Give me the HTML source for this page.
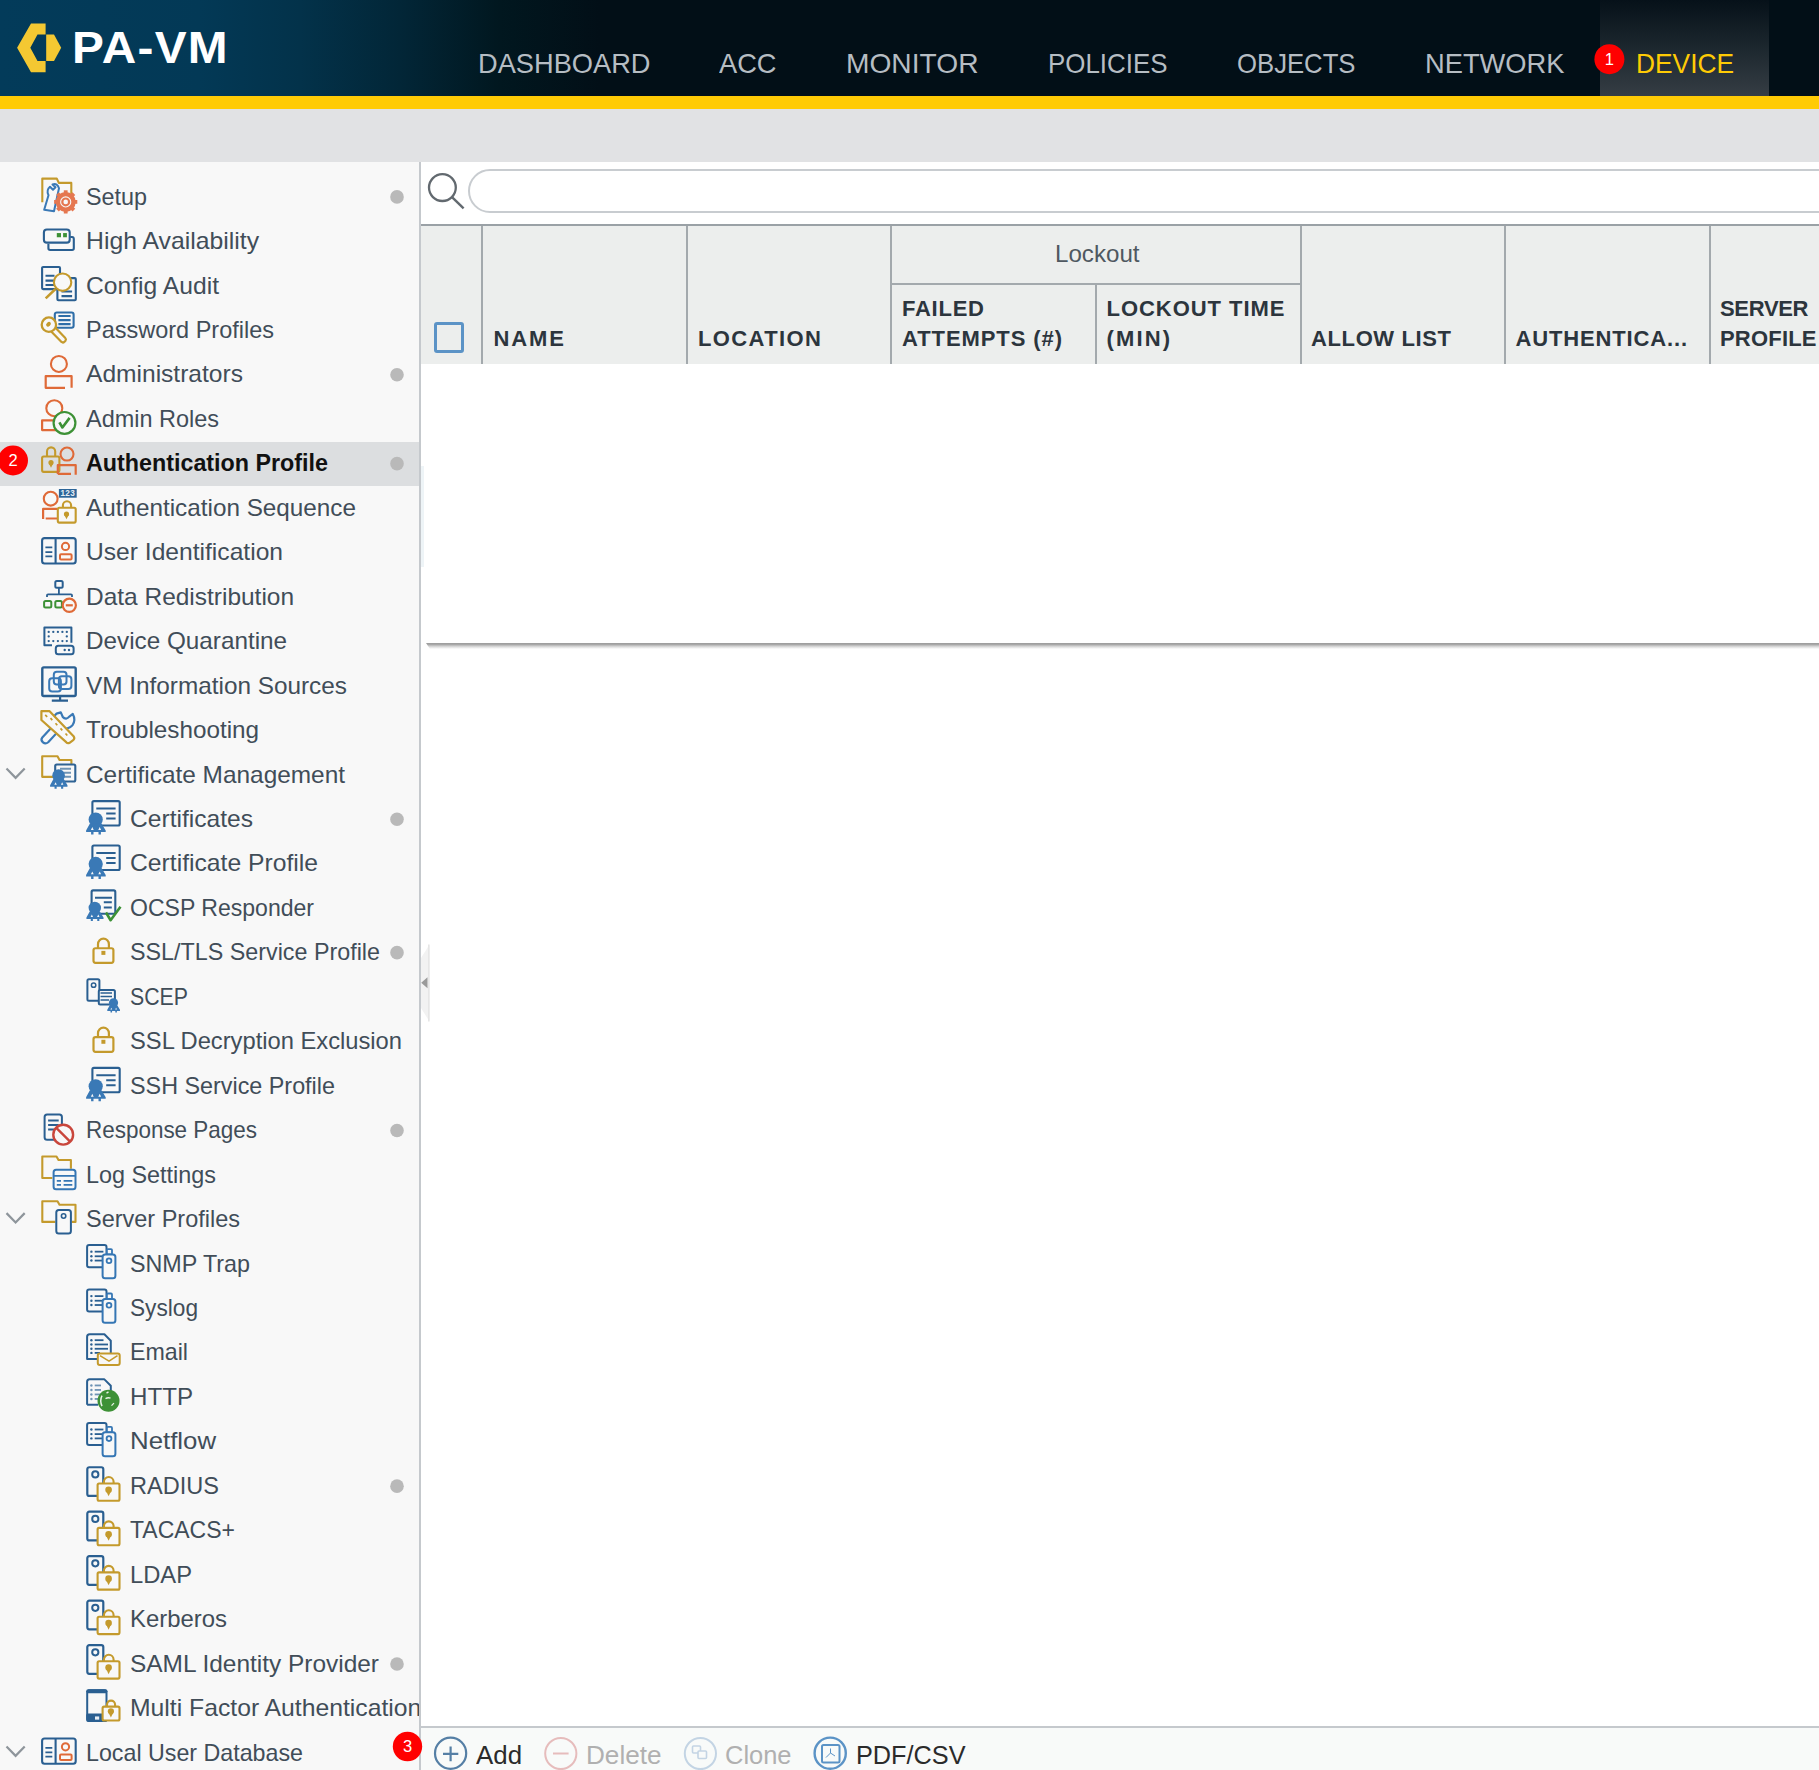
<!DOCTYPE html><html><head><meta charset="utf-8"><style>html,body{margin:0;padding:0;width:1819px;height:1770px;overflow:hidden;background:#fff}.t{position:absolute;white-space:nowrap;font-family:"Liberation Sans",sans-serif;transform-origin:0 0}</style></head><body><div style="position:relative;width:1819px;height:1770px;overflow:hidden"><div style="position:absolute;left:0px;top:0px;width:1819px;height:96px;background:linear-gradient(to right,#033b5a 0px,#033956 200px,#03324a 300px,#022637 400px,#01171f 500px,#020f17 600px,#020f17 100%);"></div><div style="position:absolute;left:1600px;top:0px;width:169px;height:96px;background:linear-gradient(to bottom,#061119 0%,#1a252c 45%,#353d44 100%);"></div><div style="position:absolute;left:0px;top:96px;width:1819px;height:13px;background:#ffcb05;"></div><div style="position:absolute;left:0px;top:109px;width:1819px;height:53px;background:#e1e2e4;"></div><div style="position:absolute;left:0px;top:162px;width:419px;height:1608px;background:#f8f8f8;"></div><div style="position:absolute;left:419px;top:162px;width:2px;height:1608px;background:#c5c9cd;"></div><div style="position:absolute;left:421px;top:162px;width:1398px;height:1608px;background:#ffffff;"></div><div style="position:absolute;left:421px;top:466px;width:3px;height:101px;background:#eef4f7;"></div><div style="position:absolute;left:0px;top:442px;width:419px;height:44px;background:#dcdee0;"></div><span class="t" style="left:72px;top:26.25px;font-size:44px;line-height:44px;color:#ffffff;font-weight:bold;letter-spacing:1.2px;transform:scaleX(1.0864);">PA-VM</span><span class="t" style="left:478px;top:49.50px;font-size:28px;line-height:28px;color:#b6bdc3;transform:scaleX(0.9727);">DASHBOARD</span><span class="t" style="left:719px;top:49.50px;font-size:28px;line-height:28px;color:#b6bdc3;transform:scaleX(0.9728);">ACC</span><span class="t" style="left:846px;top:49.50px;font-size:28px;line-height:28px;color:#b6bdc3;transform:scaleX(1.0059);">MONITOR</span><span class="t" style="left:1048px;top:49.50px;font-size:28px;line-height:28px;color:#b6bdc3;transform:scaleX(0.9252);">POLICIES</span><span class="t" style="left:1237px;top:49.50px;font-size:28px;line-height:28px;color:#b6bdc3;transform:scaleX(0.9177);">OBJECTS</span><span class="t" style="left:1425px;top:49.50px;font-size:28px;line-height:28px;color:#b6bdc3;transform:scaleX(0.9749);">NETWORK</span><span class="t" style="left:1635.5px;top:49.50px;font-size:28px;line-height:28px;color:#fecb05;transform:scaleX(0.9402);">DEVICE</span><div style="position:absolute;left:0;top:162px;width:419px;height:1608px;overflow:hidden"><span class="t" style="left:86px;top:22.58px;font-size:24px;line-height:24px;color:#414d58;transform:scaleX(0.9726)">Setup</span><span class="t" style="left:86px;top:67.04px;font-size:24px;line-height:24px;color:#414d58;transform:scaleX(1.0322)">High Availability</span><span class="t" style="left:86px;top:111.50px;font-size:24px;line-height:24px;color:#414d58;transform:scaleX(1.0278)">Config Audit</span><span class="t" style="left:86px;top:155.96px;font-size:24px;line-height:24px;color:#414d58;transform:scaleX(0.9788)">Password Profiles</span><span class="t" style="left:86px;top:200.41px;font-size:24px;line-height:24px;color:#414d58;transform:scaleX(1.0235)">Administrators</span><span class="t" style="left:86px;top:244.87px;font-size:24px;line-height:24px;color:#414d58;transform:scaleX(0.9776)">Admin Roles</span><span class="t" style="left:86px;top:289.33px;font-size:24px;line-height:24px;color:#111111;font-weight:bold;transform:scaleX(0.9705)">Authentication Profile</span><span class="t" style="left:86px;top:333.78px;font-size:24px;line-height:24px;color:#414d58;transform:scaleX(1.0118)">Authentication Sequence</span><span class="t" style="left:86px;top:378.24px;font-size:24px;line-height:24px;color:#414d58;transform:scaleX(1.0256)">User Identification</span><span class="t" style="left:86px;top:422.70px;font-size:24px;line-height:24px;color:#414d58;transform:scaleX(1.0192)">Data Redistribution</span><span class="t" style="left:86px;top:467.15px;font-size:24px;line-height:24px;color:#414d58;transform:scaleX(1.0113)">Device Quarantine</span><span class="t" style="left:86px;top:511.61px;font-size:24px;line-height:24px;color:#414d58;transform:scaleX(1.0137)">VM Information Sources</span><span class="t" style="left:86px;top:556.07px;font-size:24px;line-height:24px;color:#414d58;transform:scaleX(1.0106)">Troubleshooting</span><span class="t" style="left:86px;top:600.52px;font-size:24px;line-height:24px;color:#414d58;transform:scaleX(1.0166)">Certificate Management</span><span class="t" style="left:130px;top:644.98px;font-size:24px;line-height:24px;color:#414d58;transform:scaleX(1.0247)">Certificates</span><span class="t" style="left:130px;top:689.44px;font-size:24px;line-height:24px;color:#414d58;transform:scaleX(1.0288)">Certificate Profile</span><span class="t" style="left:130px;top:733.90px;font-size:24px;line-height:24px;color:#414d58;transform:scaleX(0.9601)">OCSP Responder</span><span class="t" style="left:130px;top:778.35px;font-size:24px;line-height:24px;color:#414d58;transform:scaleX(0.9710)">SSL/TLS Service Profile</span><span class="t" style="left:130px;top:822.81px;font-size:24px;line-height:24px;color:#414d58;transform:scaleX(0.8872)">SCEP</span><span class="t" style="left:130px;top:867.27px;font-size:24px;line-height:24px;color:#414d58;transform:scaleX(0.9882)">SSL Decryption Exclusion</span><span class="t" style="left:130px;top:911.72px;font-size:24px;line-height:24px;color:#414d58;transform:scaleX(0.9726)">SSH Service Profile</span><span class="t" style="left:86px;top:956.18px;font-size:24px;line-height:24px;color:#414d58;transform:scaleX(0.9356)">Response Pages</span><span class="t" style="left:86px;top:1000.64px;font-size:24px;line-height:24px;color:#414d58;transform:scaleX(0.9744)">Log Settings</span><span class="t" style="left:86px;top:1045.09px;font-size:24px;line-height:24px;color:#414d58;transform:scaleX(0.9784)">Server Profiles</span><span class="t" style="left:130px;top:1089.55px;font-size:24px;line-height:24px;color:#414d58;transform:scaleX(0.9708)">SNMP Trap</span><span class="t" style="left:130px;top:1134.01px;font-size:24px;line-height:24px;color:#414d58;transform:scaleX(0.9440)">Syslog</span><span class="t" style="left:130px;top:1178.47px;font-size:24px;line-height:24px;color:#414d58;transform:scaleX(0.9664)">Email</span><span class="t" style="left:130px;top:1222.92px;font-size:24px;line-height:24px;color:#414d58;transform:scaleX(1.0055)">HTTP</span><span class="t" style="left:130px;top:1267.38px;font-size:24px;line-height:24px;color:#414d58;transform:scaleX(1.0748)">Netflow</span><span class="t" style="left:130px;top:1311.84px;font-size:24px;line-height:24px;color:#414d58;transform:scaleX(0.9814)">RADIUS</span><span class="t" style="left:130px;top:1356.29px;font-size:24px;line-height:24px;color:#414d58;transform:scaleX(0.9581)">TACACS+</span><span class="t" style="left:130px;top:1400.75px;font-size:24px;line-height:24px;color:#414d58;transform:scaleX(0.9888)">LDAP</span><span class="t" style="left:130px;top:1445.21px;font-size:24px;line-height:24px;color:#414d58;transform:scaleX(0.9960)">Kerberos</span><span class="t" style="left:130px;top:1489.66px;font-size:24px;line-height:24px;color:#414d58;transform:scaleX(1.0181)">SAML Identity Provider</span><span class="t" style="left:130px;top:1534.12px;font-size:24px;line-height:24px;color:#414d58;transform:scaleX(1.0300)">Multi Factor Authentication</span><span class="t" style="left:86px;top:1578.58px;font-size:24px;line-height:24px;color:#414d58;transform:scaleX(0.9683)">Local User Database</span></div><div style="position:absolute;left:468px;top:168.5px;width:1400px;height:40px;border:2px solid #c8ccd0;border-radius:22px;background:#fff"></div><div style="position:absolute;left:421px;top:224px;width:1398px;height:2px;background:#9aa1a6;"></div><div style="position:absolute;left:421px;top:226px;width:1398px;height:138px;background:#eceeed;"></div><div style="position:absolute;left:481px;top:226px;width:2px;height:138px;background:#a3a9ad;"></div><div style="position:absolute;left:686px;top:226px;width:2px;height:138px;background:#a3a9ad;"></div><div style="position:absolute;left:890px;top:226px;width:2px;height:138px;background:#a3a9ad;"></div><div style="position:absolute;left:1300px;top:226px;width:2px;height:138px;background:#a3a9ad;"></div><div style="position:absolute;left:1504px;top:226px;width:2px;height:138px;background:#a3a9ad;"></div><div style="position:absolute;left:1709px;top:226px;width:2px;height:138px;background:#a3a9ad;"></div><div style="position:absolute;left:1095px;top:285px;width:2px;height:79px;background:#a3a9ad;"></div><div style="position:absolute;left:892px;top:283px;width:408px;height:2px;background:#a3a9ad;"></div><div style="position:absolute;left:434px;top:322px;width:23.5px;height:24.5px;border:3px solid #5b93c6;border-radius:3px"></div><span class="t" style="left:493.5px;top:328.38px;font-size:22px;line-height:22px;color:#2c353d;font-weight:bold;letter-spacing:1.906px;">NAME</span><span class="t" style="left:698.0px;top:328.38px;font-size:22px;line-height:22px;color:#2c353d;font-weight:bold;letter-spacing:1.393px;">LOCATION</span><span class="t" style="left:902.0px;top:298.38px;font-size:22px;line-height:22px;color:#2c353d;font-weight:bold;letter-spacing:0.756px;">FAILED</span><span class="t" style="left:902.0px;top:328.38px;font-size:22px;line-height:22px;color:#2c353d;font-weight:bold;letter-spacing:0.916px;">ATTEMPTS (#)</span><span class="t" style="left:1106.5px;top:298.38px;font-size:22px;line-height:22px;color:#2c353d;font-weight:bold;letter-spacing:0.962px;">LOCKOUT TIME</span><span class="t" style="left:1106.5px;top:328.38px;font-size:22px;line-height:22px;color:#2c353d;font-weight:bold;letter-spacing:2.129px;">(MIN)</span><span class="t" style="left:1311.0px;top:328.38px;font-size:22px;line-height:22px;color:#2c353d;font-weight:bold;letter-spacing:0.622px;">ALLOW LIST</span><span class="t" style="left:1515.5px;top:328.38px;font-size:22px;line-height:22px;color:#2c353d;font-weight:bold;letter-spacing:0.848px;">AUTHENTICA...</span><span class="t" style="left:1720.0px;top:298.38px;font-size:22px;line-height:22px;color:#2c353d;font-weight:bold;letter-spacing:-0.316px;">SERVER</span><span class="t" style="left:1720.0px;top:328.38px;font-size:22px;line-height:22px;color:#2c353d;font-weight:bold;letter-spacing:0.195px;">PROFILE</span><span class="t" style="left:1055px;top:241.68px;font-size:24px;line-height:24px;color:#4f5861;transform:scaleX(1.0054);">Lockout</span><div style="position:absolute;left:426px;top:643px;width:1393px;height:6px;background:linear-gradient(to bottom,#9a9a9a 0,#a8a8a8 25%,#d8d8d8 60%,#ffffff 100%);clip-path:polygon(0 0,100% 0,100% 100%,4px 100%)"></div><div style="position:absolute;left:421px;top:1726px;width:1398px;height:2px;background:#c5c9cd;"></div><div style="position:absolute;left:421px;top:1728px;width:1398px;height:42px;background:#f8faf9;"></div><span class="t" style="left:475.5px;top:1741.79px;font-size:26px;line-height:26px;color:#2b2b2b;transform:scaleX(0.9946);">Add</span><span class="t" style="left:585.5px;top:1741.79px;font-size:26px;line-height:26px;color:#b0b0b0;transform:scaleX(1.0048);">Delete</span><span class="t" style="left:724.5px;top:1741.79px;font-size:26px;line-height:26px;color:#b0b0b0;transform:scaleX(0.9791);">Clone</span><span class="t" style="left:856px;top:1741.79px;font-size:26px;line-height:26px;color:#2b2b2b;transform:scaleX(0.9717);">PDF/CSV</span><svg style="position:absolute;left:0;top:0" width="1819" height="1770" viewBox="0 0 1819 1770"><polygon fill="#f4c832" points="31,23.4 45.6,23.4 45.6,34.6 37.5,34.6 30.3,47.8 37.5,61 45.6,61 45.6,72.2 31,72.2 17.1,47.8"/><polygon fill="#f4c832" points="46.2,34.6 54,34.6 61.2,47.8 54,61 46.2,61"/><g transform="translate(0,175.30)" fill="none" stroke-width="2.1" stroke-linejoin="round"><path d="M42.3,27 V3.3 H56.8 L58.8,7.6 H71.3 V19" stroke="#c49a2c"/><path d="M44.2,34.5 L48.5,20 Q46,15 50,11.5 L53,14.5 L55.5,12 L52.5,9.2 Q57.5,7.5 59,13 L54,36 Z" fill="#f8f8f8" stroke="#3a79b6" stroke-width="2"/><circle cx="65.7" cy="26.6" r="7.8" stroke="#e57750" stroke-width="4.4" fill="#f8f8f8"/><rect x="63.8" y="15" width="3.8" height="4.5" fill="#e57750" stroke="none" transform="rotate(0 65.7 26.6)"/><rect x="63.8" y="15" width="3.8" height="4.5" fill="#e57750" stroke="none" transform="rotate(45 65.7 26.6)"/><rect x="63.8" y="15" width="3.8" height="4.5" fill="#e57750" stroke="none" transform="rotate(90 65.7 26.6)"/><rect x="63.8" y="15" width="3.8" height="4.5" fill="#e57750" stroke="none" transform="rotate(135 65.7 26.6)"/><rect x="63.8" y="15" width="3.8" height="4.5" fill="#e57750" stroke="none" transform="rotate(180 65.7 26.6)"/><rect x="63.8" y="15" width="3.8" height="4.5" fill="#e57750" stroke="none" transform="rotate(225 65.7 26.6)"/><rect x="63.8" y="15" width="3.8" height="4.5" fill="#e57750" stroke="none" transform="rotate(270 65.7 26.6)"/><rect x="63.8" y="15" width="3.8" height="4.5" fill="#e57750" stroke="none" transform="rotate(315 65.7 26.6)"/><circle cx="65.7" cy="26.6" r="3.4" stroke="#e57750" stroke-width="2.2"/></g><circle cx="397" cy="196.90" r="6.8" fill="#b9b9b9"/><g transform="translate(0,219.76)" fill="none" stroke-width="2.1" stroke-linejoin="round"><path d="M48.4,24 V28.6 Q48.4,30.3 50.2,30.3 H72.1 Q73.8,30.3 73.8,28.6 V19.3 Q73.8,17.3 72,17.3 H70.2" stroke="#2a5f91"/><rect x="43.9" y="9.8" width="25.8" height="13.1" rx="3" stroke="#2a5f91"/><rect x="56.8" y="13.3" width="4.2" height="4.2" fill="#3d9136" stroke="none"/><rect x="63.1" y="13.3" width="3.8" height="4.2" fill="#3d9136" stroke="none"/></g><g transform="translate(0,264.21)" fill="none" stroke-width="2.1" stroke-linejoin="round"><rect x="42.1" y="2.8" width="17.9" height="22.1" rx="1" stroke="#2a5f91"/><path d="M45.5,11.5 H54.5 M45.5,16.4 H54.5 M45.5,20.8 H54.5" stroke="#2a5f91"/><rect x="57.4" y="13.9" width="18.4" height="22.1" rx="1" fill="#f8f8f8" stroke="#2a5f91"/><path d="M61.5,27.3 H72.1 M61.5,31.9 H72.1" stroke="#2a5f91"/><circle cx="62.6" cy="18" r="8.7" fill="#f8f8f8" stroke="#c49a2c"/><path d="M55.5,24.8 L45.7,34.2" stroke="#c49a2c" stroke-width="2.5"/></g><g transform="translate(0,308.67)" fill="none" stroke-width="2.1" stroke-linejoin="round"><rect x="54.8" y="3.8" width="18.8" height="15.3" rx="2" stroke="#2f6ea8"/><path d="M58.4,7.4 H70.6 M58.4,11.5 H70.6 M58.4,15.5 H70.6" stroke="#2f6ea8"/><path d="M50.5,22 L61.5,33.3 Q63,34.5 64.5,33 L65.5,32 Q66.5,30.5 65.3,29.3 L55,18.5" fill="#f8f8f8" stroke="#c49a2c" stroke-width="2.2"/><circle cx="48.9" cy="16" r="7.2" fill="#f8f8f8" stroke="#c49a2c" stroke-width="2.3"/><ellipse cx="48.5" cy="15.6" rx="2.6" ry="2" transform="rotate(-40 48.5 15.6)" fill="#c49a2c" stroke="none"/></g><g transform="translate(0,353.13)" fill="none" stroke-width="2.1" stroke-linejoin="round"><circle cx="58.9" cy="10.8" r="8" stroke="#df6a38"/><path d="M71.6,34.7 V23 H45.7 V34.7 H65" stroke="#df6a38" stroke-width="2.2"/></g><circle cx="397" cy="374.73" r="6.8" fill="#b9b9b9"/><g transform="translate(0,397.59)" fill="none" stroke-width="2.1" stroke-linejoin="round"><circle cx="54.3" cy="10.6" r="8" stroke="#df6a38"/><path d="M62,22.8 H42.1 V32.5 H62" stroke="#df6a38" stroke-width="2.2"/><circle cx="64.5" cy="25.3" r="10.9" fill="#f8f8f8" stroke="#3d9136" stroke-width="2.2"/><path d="M59.4,24.8 L62.4,29.9 L69.6,20.3" stroke="#3d9136" stroke-width="2.6"/></g><g transform="translate(0,442.04)" fill="none" stroke-width="2.1" stroke-linejoin="round"><path d="M47,14.5 V9.400000000000002 A4.100000000000001,4.100000000000001 0 0 1 55.2,9.400000000000002 V14.5" stroke="#c49a2c"/><rect x="42.1" y="14.5" width="17.299999999999997" height="15.3" rx="1.5" fill="#dcdee0" stroke="#c49a2c"/><circle cx="51" cy="20.5" r="2.6" fill="#c49a2c" stroke="none"/><path d="M48.92,21.5 L51,25.7 L53.08,21.5Z" fill="#c49a2c" stroke="none"/><circle cx="67" cy="12" r="6.5" stroke="#df6a38"/><path d="M57.8,32 V23.1 H75.7 V32.8 M57.8,31.8 H71" stroke="#df6a38" stroke-width="2.2"/></g><circle cx="397" cy="463.64" r="6.8" fill="#b9b9b9"/><g transform="translate(0,486.50)" fill="none" stroke-width="2.1" stroke-linejoin="round"><rect x="58.9" y="2.5" width="17.8" height="8.7" fill="#2d6699" stroke="none"/><text x="67.8" y="9.9" font-family="Liberation Sans" font-weight="bold" font-size="8.2" fill="#e8eef4" stroke="none" text-anchor="middle" letter-spacing="0.3">123</text><circle cx="50.7" cy="12.2" r="6.9" stroke="#df6a38"/><path d="M43.1,32.5 V22.4 H57 M45.7,32 H57" stroke="#df6a38" stroke-width="2.2"/><path d="M62.9,21.3 V18.799999999999997 A4.099999999999998,4.099999999999998 0 0 1 71.1,18.799999999999997 V21.3" stroke="#c49a2c"/><rect x="57.8" y="21.3" width="17.900000000000006" height="14.8" rx="1.5" fill="#f8f8f8" stroke="#c49a2c"/><circle cx="66.5" cy="27.5" r="2.6" fill="#c49a2c" stroke="none"/><path d="M64.42,28.5 L66.5,32.7 L68.58,28.5Z" fill="#c49a2c" stroke="none"/></g><g transform="translate(0,530.96)" fill="none" stroke-width="2.1" stroke-linejoin="round"><rect x="42.1" y="7.2" width="33.6" height="25.3" rx="2.5" stroke="#2a5f91"/><path d="M55.6,7.2 V32.5" stroke="#2a5f91"/><path d="M45.4,16.5 H52.3 M45.4,21.1 H52.3 M45.4,25.4 H52.3" stroke="#2a5f91" stroke-width="1.8"/><circle cx="65.5" cy="15.5" r="3.6" stroke="#df6a38" stroke-width="2"/><rect x="60" y="23.3" width="11.6" height="5.3" rx="1" stroke="#df6a38" stroke-width="2"/></g><g transform="translate(0,575.41)" fill="none" stroke-width="2.1" stroke-linejoin="round"><rect x="55.3" y="5.7" width="7.4" height="6.6" rx="1.5" stroke="#2a5f91" stroke-width="2"/><path d="M58.9,12.6 V18.9 M47,21.5 V19.8 Q47,18.9 48,18.9 H71 Q72,18.9 72,19.8 V21.5" stroke="#2a5f91" stroke-width="1.8"/><rect x="44.1" y="25.5" width="7.2" height="6.7" rx="1.5" stroke="#3d9136" stroke-width="2"/><rect x="55.3" y="25.5" width="6.6" height="6.7" rx="1.5" stroke="#3d9136" stroke-width="2"/><circle cx="69.3" cy="29.9" r="6.6" fill="#f8f8f8" stroke="#df6a38" stroke-width="2.2"/><path d="M65.8,29.9 H72.8" stroke="#df6a38" stroke-width="2.2"/></g><g transform="translate(0,619.87)" fill="none" stroke-width="2.1" stroke-linejoin="round"><path d="M71.4,23 V7.7 H44.4 V25.3 H52" stroke="#2a5f91" stroke-width="2"/><circle cx="48.7" cy="12.1" r="1.15" fill="#2a5f91" stroke="none"/><circle cx="53.3" cy="12.1" r="1.15" fill="#2a5f91" stroke="none"/><circle cx="57.9" cy="12.1" r="1.15" fill="#2a5f91" stroke="none"/><circle cx="62.4" cy="12.1" r="1.15" fill="#2a5f91" stroke="none"/><circle cx="66.8" cy="12.1" r="1.15" fill="#2a5f91" stroke="none"/><circle cx="48.7" cy="21.2" r="1.15" fill="#2a5f91" stroke="none"/><circle cx="53.3" cy="21.2" r="1.15" fill="#2a5f91" stroke="none"/><circle cx="57.9" cy="21.2" r="1.15" fill="#2a5f91" stroke="none"/><circle cx="62.4" cy="21.2" r="1.15" fill="#2a5f91" stroke="none"/><circle cx="66.8" cy="21.2" r="1.15" fill="#2a5f91" stroke="none"/><circle cx="48.7" cy="16.6" r="1.15" fill="#2a5f91" stroke="none"/><circle cx="66.8" cy="16.6" r="1.15" fill="#2a5f91" stroke="none"/><rect x="55.8" y="26" width="17.8" height="8.4" rx="2.5" stroke="#2a5f91" stroke-width="2"/><circle cx="64.7" cy="30.1" r="1.2" fill="#2a5f91" stroke="none"/><circle cx="69" cy="30.1" r="1.2" fill="#2a5f91" stroke="none"/></g><g transform="translate(0,664.33)" fill="none" stroke-width="2.1" stroke-linejoin="round"><rect x="42.3" y="3" width="33.4" height="28.6" rx="1.5" stroke="#2a5f91" stroke-width="2.4"/><path d="M60.1,31.6 V35.5 M51.8,36.3 H68" stroke="#2a5f91" stroke-width="2.2"/><rect x="49.2" y="14" width="11.7" height="13.2" rx="3" stroke="#3a79b6" stroke-width="2"/><rect x="53.8" y="7.3" width="12.7" height="12.8" rx="3" stroke="#3a79b6" stroke-width="2"/><rect x="58.9" y="11.9" width="12.5" height="12.8" rx="3" stroke="#3a79b6" stroke-width="2"/></g><g transform="translate(0,708.78)" fill="none" stroke-width="2.1" stroke-linejoin="round"><path d="M42.3,28.6 L54.3,15.6 Q51.5,9 56.5,4.8 L60.8,3.6 L62.8,8.2 Q64,9.8 66,9.8 Q68,9.6 69,8 L72.8,5.2 Q76,11 72.5,16.5 Q68,21 60,20.6 L48.2,33.5 Q45.5,35.8 43,33.6 Q40.3,31.2 42.3,28.6Z" fill="#f8f8f8" stroke="#3a79b6" stroke-width="2.2"/><path d="M41.4,2.4 L49.6,2.4 L73.8,27.8 Q75,29.8 73.2,31.4 L69.6,34 Q67.6,35 66.2,33.4 L41.4,11.2 Z" fill="#f8f8f8" stroke="#c49a2c" stroke-width="2.2"/><path d="M45.2,6 L47.2,8 M50.5,9.4 L52.3,11.4 M55.5,14.5 L57.3,16.5 M60.5,19.6 L62.3,21.6 M65.5,24.7 L67.3,26.7" stroke="#c49a2c" stroke-width="1.7"/></g><g transform="translate(0,753.24)" fill="none" stroke-width="2.1" stroke-linejoin="round"><path d="M53,23.6 H42.2 V3 H57.5 L59.5,6.7 H71.4 V11.3" stroke="#c49a2c"/><rect x="55.2" y="11.3" width="20.1" height="17" rx="1.5" fill="#f8f8f8" stroke="#2f6394"/><path d="M60,15.5 H71 M64,19.5 H71 M64,23.5 H71" stroke="#6f94b5" stroke-width="1.8"/><circle cx="58.6" cy="22.3" r="6.3" fill="#3a79b6" stroke="none"/><path d="M53.45,25.85 L50.08,32.06 L50.08,33.48 L54.52,33.48 L54.52,35.61 L56.65,35.61 L56.65,33.48 L61.08,33.48 L61.08,35.61 L63.21,35.61 L63.21,33.48 L67.47,33.48 L67.47,32.06 L63.75,25.85 Z" fill="#3a79b6" stroke="none"/><path d="M54.34,31.53 L56.83,31.53 L55.58,29.04 Z M60.91,31.53 L63.39,31.53 L62.15,29.04 Z" fill="#f8f8f8" stroke="none"/></g><path d="M6.5,768.54 L15.6,777.84 L24.7,768.54" fill="none" stroke="#8e959b" stroke-width="2.2"/><g transform="translate(0,797.70)" fill="none" stroke-width="2.1" stroke-linejoin="round"><rect x="92.4" y="3.4" width="27.3" height="24.4" rx="1.5" stroke="#2a5f91"/><path d="M96.3,10.8 H115.6 M106.2,15.8 H115.6 M106.2,20.9 H115.6" stroke="#2a5f91" stroke-width="2"/><circle cx="95.7" cy="21.8" r="7.1" fill="#3a79b6" stroke="none"/><path d="M89.90,25.80 L86.10,32.80 L86.10,34.40 L91.10,34.40 L91.10,36.80 L93.50,36.80 L93.50,34.40 L98.50,34.40 L98.50,36.80 L100.90,36.80 L100.90,34.40 L105.70,34.40 L105.70,32.80 L101.50,25.80 Z" fill="#3a79b6" stroke="none"/><path d="M90.90,32.20 L93.70,32.20 L92.30,29.40 Z M98.30,32.20 L101.10,32.20 L99.70,29.40 Z" fill="#f8f8f8" stroke="none"/></g><circle cx="397" cy="819.30" r="6.8" fill="#b9b9b9"/><g transform="translate(0,842.15)" fill="none" stroke-width="2.1" stroke-linejoin="round"><rect x="92.4" y="3.4" width="27.3" height="24.4" rx="1.5" stroke="#2a5f91"/><path d="M96.3,10.8 H115.6 M106.2,15.8 H115.6 M106.2,20.9 H115.6" stroke="#2a5f91" stroke-width="2"/><circle cx="95.7" cy="21.8" r="7.1" fill="#3a79b6" stroke="none"/><path d="M89.90,25.80 L86.10,32.80 L86.10,34.40 L91.10,34.40 L91.10,36.80 L93.50,36.80 L93.50,34.40 L98.50,34.40 L98.50,36.80 L100.90,36.80 L100.90,34.40 L105.70,34.40 L105.70,32.80 L101.50,25.80 Z" fill="#3a79b6" stroke="none"/><path d="M90.90,32.20 L93.70,32.20 L92.30,29.40 Z M98.30,32.20 L101.10,32.20 L99.70,29.40 Z" fill="#f8f8f8" stroke="none"/></g><g transform="translate(0,886.61)" fill="none" stroke-width="2.1" stroke-linejoin="round"><rect x="91.6" y="3.8" width="23.7" height="23.3" rx="1.5" stroke="#2a5f91"/><path d="M95,11.1 H112 M103.8,15.7 H111.8 M103.8,21 H111.8" stroke="#2a5f91" stroke-width="2"/><circle cx="94.8" cy="21.3" r="6.2" fill="#3a79b6" stroke="none"/><path d="M89.74,24.79 L86.42,30.91 L86.42,32.30 L90.78,32.30 L90.78,34.40 L92.88,34.40 L92.88,32.30 L97.25,32.30 L97.25,34.40 L99.34,34.40 L99.34,32.30 L103.53,32.30 L103.53,30.91 L99.86,24.79 Z" fill="#3a79b6" stroke="none"/><path d="M90.61,30.38 L93.05,30.38 L91.83,27.94 Z M97.07,30.38 L99.52,30.38 L98.29,27.94 Z" fill="#f8f8f8" stroke="none"/><path d="M106,25.9 L110.6,33.6 L120.5,20.2" stroke="#3d9136" stroke-width="2.6"/></g><g transform="translate(0,931.07)" fill="none" stroke-width="2.1" stroke-linejoin="round"><path d="M98,17.2 V13.1 A5.45,5.45 0 0 1 108.9,13.1 V17.2" stroke="#c49a2c" stroke-width="2.2"/><rect x="93.5" y="17.2" width="19.9" height="14.6" rx="2" stroke="#c49a2c" stroke-width="2.2"/><rect x="101.4" y="19.8" width="4" height="4" fill="#c49a2c" stroke="none"/></g><circle cx="397" cy="952.67" r="6.8" fill="#b9b9b9"/><g transform="translate(0,975.53)" fill="none" stroke-width="2.1" stroke-linejoin="round"><rect x="87.4" y="3.8" width="12" height="21.4" rx="1.5" stroke="#2a5f91" stroke-width="2"/><circle cx="93.6" cy="9.6" r="2.2" stroke="#2a5f91" stroke-width="1.5"/><rect x="98.8" y="14.4" width="16.1" height="14.6" rx="1.5" fill="#f8f8f8" stroke="#2a5f91" stroke-width="2"/><path d="M100.5,17.5 H112 M100.5,21 H112 M100.5,24.5 H109" stroke="#2a5f91" stroke-width="1.6"/><circle cx="113.5" cy="27.2" r="4.6" fill="#3a79b6" stroke="none"/><path d="M109.74,29.79 L107.28,34.33 L107.28,35.36 L110.52,35.36 L110.52,36.92 L112.07,36.92 L112.07,35.36 L115.31,35.36 L115.31,36.92 L116.87,36.92 L116.87,35.36 L119.98,35.36 L119.98,34.33 L117.26,29.79 Z" fill="#3a79b6" stroke="none"/><path d="M110.39,33.94 L112.20,33.94 L111.30,32.12 Z M115.18,33.94 L117.00,33.94 L116.09,32.12 Z" fill="#f8f8f8" stroke="none"/></g><g transform="translate(0,1019.98)" fill="none" stroke-width="2.1" stroke-linejoin="round"><path d="M98,17.2 V13.1 A5.45,5.45 0 0 1 108.9,13.1 V17.2" stroke="#c49a2c" stroke-width="2.2"/><rect x="93.5" y="17.2" width="19.9" height="14.6" rx="2" stroke="#c49a2c" stroke-width="2.2"/><rect x="101.4" y="19.8" width="4" height="4" fill="#c49a2c" stroke="none"/></g><g transform="translate(0,1064.44)" fill="none" stroke-width="2.1" stroke-linejoin="round"><rect x="92.4" y="3.4" width="27.3" height="24.4" rx="1.5" stroke="#2a5f91"/><path d="M96.3,10.8 H115.6 M106.2,15.8 H115.6 M106.2,20.9 H115.6" stroke="#2a5f91" stroke-width="2"/><circle cx="95.7" cy="21.8" r="7.1" fill="#3a79b6" stroke="none"/><path d="M89.90,25.80 L86.10,32.80 L86.10,34.40 L91.10,34.40 L91.10,36.80 L93.50,36.80 L93.50,34.40 L98.50,34.40 L98.50,36.80 L100.90,36.80 L100.90,34.40 L105.70,34.40 L105.70,32.80 L101.50,25.80 Z" fill="#3a79b6" stroke="none"/><path d="M90.90,32.20 L93.70,32.20 L92.30,29.40 Z M98.30,32.20 L101.10,32.20 L99.70,29.40 Z" fill="#f8f8f8" stroke="none"/></g><g transform="translate(0,1108.90)" fill="none" stroke-width="2.1" stroke-linejoin="round"><rect x="44.6" y="5.7" width="17.3" height="25.2" rx="2.5" stroke="#2a5f91" stroke-width="2"/><path d="M48.1,11.5 H58.7 M48.1,16 H58.7 M48.1,20.5 H55" stroke="#2a5f91" stroke-width="2"/><circle cx="63.2" cy="25.8" r="9.9" fill="#f8f8f8" stroke="#c9463c" stroke-width="2.4"/><path d="M56.3,18.9 L70.1,32.7" stroke="#c9463c" stroke-width="2.4"/></g><circle cx="397" cy="1130.50" r="6.8" fill="#b9b9b9"/><g transform="translate(0,1153.35)" fill="none" stroke-width="2.1" stroke-linejoin="round"><path d="M52.3,24.6 H42.3 V3.1 H56.5 L58.5,6.7 H70.9 V15.4" stroke="#c49a2c"/><rect x="53.6" y="16.4" width="21.9" height="19.5" rx="2.5" fill="#f8f8f8" stroke="#3576b4" stroke-width="2"/><path d="M53.6,22.6 H75.5 M56.8,27.5 H61 M63.6,27.5 H72.3 M56.8,31.6 H61 M63.6,31.6 H72.3" stroke="#3576b4" stroke-width="1.8"/></g><g transform="translate(0,1197.81)" fill="none" stroke-width="2.1" stroke-linejoin="round"><path d="M55.3,24.1 H42.3 V3.4 H57.5 L59.5,6.9 H75.5 V24.1 H71.9" stroke="#c49a2c"/><rect x="56.3" y="12.1" width="14.6" height="23.7" rx="2.5" fill="#f8f8f8" stroke="#2a5f91" stroke-width="2"/><circle cx="63.6" cy="18.2" r="2.2" stroke="#2a5f91" stroke-width="1.6"/></g><path d="M6.5,1213.11 L15.6,1222.41 L24.7,1213.11" fill="none" stroke="#8e959b" stroke-width="2.2"/><g transform="translate(0,1242.27)" fill="none" stroke-width="2.1" stroke-linejoin="round"><rect x="87.1" y="2.8" width="19.4" height="22.1" rx="2" stroke="#2a5f91" stroke-width="2"/><circle cx="91.4" cy="9.4" r="1.2" fill="#2a5f91" stroke="none"/><path d="M94.7,9.4 H103.4" stroke="#2a5f91" stroke-width="1.8"/><circle cx="91.4" cy="14" r="1.2" fill="#2a5f91" stroke="none"/><path d="M94.7,14 H103.4" stroke="#2a5f91" stroke-width="1.8"/><circle cx="91.4" cy="18.3" r="1.2" fill="#2a5f91" stroke="none"/><path d="M94.7,18.3 H103.4" stroke="#2a5f91" stroke-width="1.8"/><rect x="106.9" y="6.8" width="5.1" height="5.4" rx="1" fill="#f8f8f8" stroke="#3576b4" stroke-width="1.8"/><rect x="102.6" y="12.2" width="12.8" height="23.9" rx="2.5" fill="#f8f8f8" stroke="#3576b4" stroke-width="2"/><circle cx="109" cy="18.5" r="2.4" stroke="#3576b4" stroke-width="1.8"/></g><g transform="translate(0,1286.72)" fill="none" stroke-width="2.1" stroke-linejoin="round"><rect x="87.1" y="2.8" width="19.4" height="22.1" rx="2" stroke="#2a5f91" stroke-width="2"/><circle cx="91.4" cy="9.4" r="1.2" fill="#2a5f91" stroke="none"/><path d="M94.7,9.4 H103.4" stroke="#2a5f91" stroke-width="1.8"/><circle cx="91.4" cy="14" r="1.2" fill="#2a5f91" stroke="none"/><path d="M94.7,14 H103.4" stroke="#2a5f91" stroke-width="1.8"/><circle cx="91.4" cy="18.3" r="1.2" fill="#2a5f91" stroke="none"/><path d="M94.7,18.3 H103.4" stroke="#2a5f91" stroke-width="1.8"/><rect x="106.9" y="6.8" width="5.1" height="5.4" rx="1" fill="#f8f8f8" stroke="#3576b4" stroke-width="1.8"/><rect x="102.6" y="12.2" width="12.8" height="23.9" rx="2.5" fill="#f8f8f8" stroke="#3576b4" stroke-width="2"/><circle cx="109" cy="18.5" r="2.4" stroke="#3576b4" stroke-width="1.8"/></g><g transform="translate(0,1331.18)" fill="none" stroke-width="2.1" stroke-linejoin="round"><path d="M87.1,27.8 V5.6 Q87.1,3.1 89.6,3.1 H104.4 L110.8,9.5 V27.8 Z" stroke="#2a5f91" stroke-width="2"/><circle cx="91.4" cy="9" r="1.2" fill="#2a5f91" stroke="none"/><path d="M94.7,9 H103.5" stroke="#2a5f91" stroke-width="1.8"/><circle cx="91.4" cy="13.3" r="1.2" fill="#2a5f91" stroke="none"/><path d="M94.7,13.3 H108" stroke="#2a5f91" stroke-width="1.8"/><circle cx="91.4" cy="17.6" r="1.2" fill="#2a5f91" stroke="none"/><path d="M94.7,17.6 H108" stroke="#2a5f91" stroke-width="1.8"/><circle cx="91.4" cy="21.7" r="1.2" fill="#2a5f91" stroke="none"/><path d="M94.7,21.7 H100" stroke="#2a5f91" stroke-width="1.8"/><rect x="97.8" y="22.2" width="21.9" height="11.7" rx="2" fill="#f8f8f8" stroke="#c49a2c" stroke-width="2"/><path d="M100,24.5 L109,30 L117.5,24.5" stroke="#c49a2c" stroke-width="1.6"/></g><g transform="translate(0,1375.64)" fill="none" stroke-width="2.1" stroke-linejoin="round"><path d="M87.1,29.1 V6.2 Q87.1,3.7 89.6,3.7 H104.4 L110.8,10.1 V22" stroke="#2a5f91" stroke-width="2"/><path d="M87.1,29.1 H98" stroke="#2a5f91" stroke-width="2"/><circle cx="91.4" cy="9.8" r="1.2" fill="#6f94b5" stroke="none"/><path d="M94.7,9.8 H101" stroke="#6f94b5" stroke-width="1.8"/><circle cx="91.4" cy="14.3" r="1.2" fill="#6f94b5" stroke="none"/><path d="M94.7,14.3 H101" stroke="#6f94b5" stroke-width="1.8"/><circle cx="91.4" cy="18.8" r="1.2" fill="#6f94b5" stroke="none"/><path d="M94.7,18.8 H101" stroke="#6f94b5" stroke-width="1.8"/><circle cx="91.4" cy="23.3" r="1.2" fill="#6f94b5" stroke="none"/><path d="M94.7,23.3 H101" stroke="#6f94b5" stroke-width="1.8"/><circle cx="108.5" cy="25.1" r="11" fill="#3d9136" stroke="none"/><path d="M102,20 Q99.5,25 102,30.5" fill="none" stroke="#eaf3e9" stroke-width="1.5"/><path d="M106.5,17.5 L108.5,16.2 M105.5,23 Q108,21.5 110.5,22.5 M111.5,30 L114,27.5" fill="none" stroke="#eaf3e9" stroke-width="1.3"/></g><g transform="translate(0,1420.10)" fill="none" stroke-width="2.1" stroke-linejoin="round"><rect x="87.1" y="2.8" width="19.4" height="22.1" rx="2" stroke="#2a5f91" stroke-width="2"/><circle cx="91.4" cy="9.4" r="1.2" fill="#2a5f91" stroke="none"/><path d="M94.7,9.4 H103.4" stroke="#2a5f91" stroke-width="1.8"/><circle cx="91.4" cy="14" r="1.2" fill="#2a5f91" stroke="none"/><path d="M94.7,14 H103.4" stroke="#2a5f91" stroke-width="1.8"/><circle cx="91.4" cy="18.3" r="1.2" fill="#2a5f91" stroke="none"/><path d="M94.7,18.3 H103.4" stroke="#2a5f91" stroke-width="1.8"/><rect x="106.9" y="6.8" width="5.1" height="5.4" rx="1" fill="#f8f8f8" stroke="#3576b4" stroke-width="1.8"/><rect x="102.6" y="12.2" width="12.8" height="23.9" rx="2.5" fill="#f8f8f8" stroke="#3576b4" stroke-width="2"/><circle cx="109" cy="18.5" r="2.4" stroke="#3576b4" stroke-width="1.8"/></g><g transform="translate(0,1464.55)" fill="none" stroke-width="2.1" stroke-linejoin="round"><rect x="87.3" y="2.7" width="16" height="28.7" rx="2" stroke="#2a5f91" stroke-width="2.2"/><circle cx="95.3" cy="9.9" r="3.1" stroke="#2a5f91" stroke-width="2"/><path d="M103.9,18.9 V17.249999999999993 A4.849999999999994,4.849999999999994 0 0 1 113.6,17.249999999999993 V18.9" stroke="#c49a2c"/><rect x="97.6" y="18.9" width="21.900000000000006" height="17.300000000000004" rx="1.5" fill="#f8f8f8" stroke="#c49a2c"/><circle cx="108.6" cy="25.2" r="3.3" fill="#c49a2c" stroke="none"/><path d="M105.96,26.2 L108.6,31.799999999999997 L111.24,26.2Z" fill="#c49a2c" stroke="none"/></g><circle cx="397" cy="1486.15" r="6.8" fill="#b9b9b9"/><g transform="translate(0,1509.01)" fill="none" stroke-width="2.1" stroke-linejoin="round"><rect x="87.3" y="2.7" width="16" height="28.7" rx="2" stroke="#2a5f91" stroke-width="2.2"/><circle cx="95.3" cy="9.9" r="3.1" stroke="#2a5f91" stroke-width="2"/><path d="M103.9,18.9 V17.249999999999993 A4.849999999999994,4.849999999999994 0 0 1 113.6,17.249999999999993 V18.9" stroke="#c49a2c"/><rect x="97.6" y="18.9" width="21.900000000000006" height="17.300000000000004" rx="1.5" fill="#f8f8f8" stroke="#c49a2c"/><circle cx="108.6" cy="25.2" r="3.3" fill="#c49a2c" stroke="none"/><path d="M105.96,26.2 L108.6,31.799999999999997 L111.24,26.2Z" fill="#c49a2c" stroke="none"/></g><g transform="translate(0,1553.47)" fill="none" stroke-width="2.1" stroke-linejoin="round"><rect x="87.3" y="2.7" width="16" height="28.7" rx="2" stroke="#2a5f91" stroke-width="2.2"/><circle cx="95.3" cy="9.9" r="3.1" stroke="#2a5f91" stroke-width="2"/><path d="M103.9,18.9 V17.249999999999993 A4.849999999999994,4.849999999999994 0 0 1 113.6,17.249999999999993 V18.9" stroke="#c49a2c"/><rect x="97.6" y="18.9" width="21.900000000000006" height="17.300000000000004" rx="1.5" fill="#f8f8f8" stroke="#c49a2c"/><circle cx="108.6" cy="25.2" r="3.3" fill="#c49a2c" stroke="none"/><path d="M105.96,26.2 L108.6,31.799999999999997 L111.24,26.2Z" fill="#c49a2c" stroke="none"/></g><g transform="translate(0,1597.92)" fill="none" stroke-width="2.1" stroke-linejoin="round"><rect x="87.3" y="2.7" width="16" height="28.7" rx="2" stroke="#2a5f91" stroke-width="2.2"/><circle cx="95.3" cy="9.9" r="3.1" stroke="#2a5f91" stroke-width="2"/><path d="M103.9,18.9 V17.249999999999993 A4.849999999999994,4.849999999999994 0 0 1 113.6,17.249999999999993 V18.9" stroke="#c49a2c"/><rect x="97.6" y="18.9" width="21.900000000000006" height="17.300000000000004" rx="1.5" fill="#f8f8f8" stroke="#c49a2c"/><circle cx="108.6" cy="25.2" r="3.3" fill="#c49a2c" stroke="none"/><path d="M105.96,26.2 L108.6,31.799999999999997 L111.24,26.2Z" fill="#c49a2c" stroke="none"/></g><g transform="translate(0,1642.38)" fill="none" stroke-width="2.1" stroke-linejoin="round"><rect x="87.3" y="2.7" width="16" height="28.7" rx="2" stroke="#2a5f91" stroke-width="2.2"/><circle cx="95.3" cy="9.9" r="3.1" stroke="#2a5f91" stroke-width="2"/><path d="M103.9,18.9 V17.249999999999993 A4.849999999999994,4.849999999999994 0 0 1 113.6,17.249999999999993 V18.9" stroke="#c49a2c"/><rect x="97.6" y="18.9" width="21.900000000000006" height="17.300000000000004" rx="1.5" fill="#f8f8f8" stroke="#c49a2c"/><circle cx="108.6" cy="25.2" r="3.3" fill="#c49a2c" stroke="none"/><path d="M105.96,26.2 L108.6,31.799999999999997 L111.24,26.2Z" fill="#c49a2c" stroke="none"/></g><circle cx="397" cy="1663.98" r="6.8" fill="#b9b9b9"/><g transform="translate(0,1686.84)" fill="none" stroke-width="2.1" stroke-linejoin="round"><rect x="87.2" y="3.4" width="19.3" height="30.7" rx="2.5" stroke="#2a5f91" stroke-width="2"/><rect x="86.2" y="2.4" width="21.3" height="4" rx="2" fill="#2a5f91" stroke="none"/><rect x="86.2" y="26.6" width="21.3" height="8.5" rx="2" fill="#2a5f91" stroke="none"/><rect x="95" y="29.6" width="4.2" height="3.2" fill="#e8eef4" stroke="none"/><path d="M107,19.8 V17.849999999999998 A4.049999999999997,4.049999999999997 0 0 1 115.1,17.849999999999998 V19.8" stroke="#c49a2c"/><rect x="102.6" y="19.8" width="16.900000000000006" height="13.8" rx="1.5" fill="#f8f8f8" stroke="#c49a2c"/><circle cx="110.9" cy="24.5" r="3.1" fill="#c49a2c" stroke="none"/><path d="M108.42,25.5 L110.9,30.7 L113.38000000000001,25.5Z" fill="#c49a2c" stroke="none"/></g><g transform="translate(0,1731.30)" fill="none" stroke-width="2.1" stroke-linejoin="round"><rect x="42.1" y="7.2" width="33.6" height="25.3" rx="2.5" stroke="#2a5f91"/><path d="M55.6,7.2 V32.5" stroke="#2a5f91"/><path d="M45.4,16.5 H52.3 M45.4,21.1 H52.3 M45.4,25.4 H52.3" stroke="#2a5f91" stroke-width="1.8"/><circle cx="65.5" cy="15.5" r="3.6" stroke="#df6a38" stroke-width="2"/><rect x="60" y="23.3" width="11.6" height="5.3" rx="1" stroke="#df6a38" stroke-width="2"/></g><path d="M6.5,1746.60 L15.6,1755.89 L24.7,1746.60" fill="none" stroke="#8e959b" stroke-width="2.2"/><circle cx="442.4" cy="187.6" r="13.4" fill="none" stroke="#62696f" stroke-width="2.3"/><path d="M452,197.2 L463.6,208.3" stroke="#62696f" stroke-width="2.4"/><path d="M421,958 L429.5,944.5 L429.5,1021.5 L421,1008Z" fill="#f2f2f2"/><rect x="428" y="944.5" width="1.6" height="77" fill="#e6e6e6"/><path d="M421.2,982.7 L427.5,977.3 L427.5,988.2Z" fill="#9a9a9a"/><circle cx="450.6" cy="1753.2" r="15.6" fill="none" stroke="#557fa5" stroke-width="2.2"/><path d="M443,1753.8 H458.3 M450.6,1746.4 V1761.2" stroke="#557fa5" stroke-width="2.2"/><circle cx="560.8" cy="1753.5" r="15.6" fill="none" stroke="#e6bcbc" stroke-width="2"/><path d="M553,1753.5 H568.6" stroke="#e6bcbc" stroke-width="2"/><circle cx="700.4" cy="1753.5" r="15.6" fill="none" stroke="#c3d4e4" stroke-width="2"/><rect x="692.5" y="1746" width="8" height="7" rx="1" fill="none" stroke="#c3d4e4" stroke-width="1.6"/><rect x="698" y="1751" width="8.5" height="7.5" rx="1" fill="#f8faf9" stroke="#c3d4e4" stroke-width="1.6"/><circle cx="830.2" cy="1753.2" r="15.6" fill="none" stroke="#5b93c6" stroke-width="2.4"/><rect x="822" y="1745" width="17.5" height="17.5" rx="1.5" fill="none" stroke="#5b93c6" stroke-width="2"/><path d="M830.5,1748.5 V1753 L826,1757.5 M830.5,1753 L835,1756" fill="none" stroke="#5b93c6" stroke-width="1"/><circle cx="1609.4" cy="59.2" r="15" fill="#ff0000"/><text x="1609.4" y="64.65" font-family="Liberation Sans" font-size="16.5" fill="#ffffff" text-anchor="middle">1</text><circle cx="13" cy="460.5" r="15" fill="#ff0000"/><text x="13" y="465.94" font-family="Liberation Sans" font-size="16.5" fill="#ffffff" text-anchor="middle">2</text><circle cx="407.5" cy="1746.5" r="14.7" fill="#ff0000"/><text x="407.5" y="1751.94" font-family="Liberation Sans" font-size="16.5" fill="#ffffff" text-anchor="middle">3</text></svg></div></body></html>
